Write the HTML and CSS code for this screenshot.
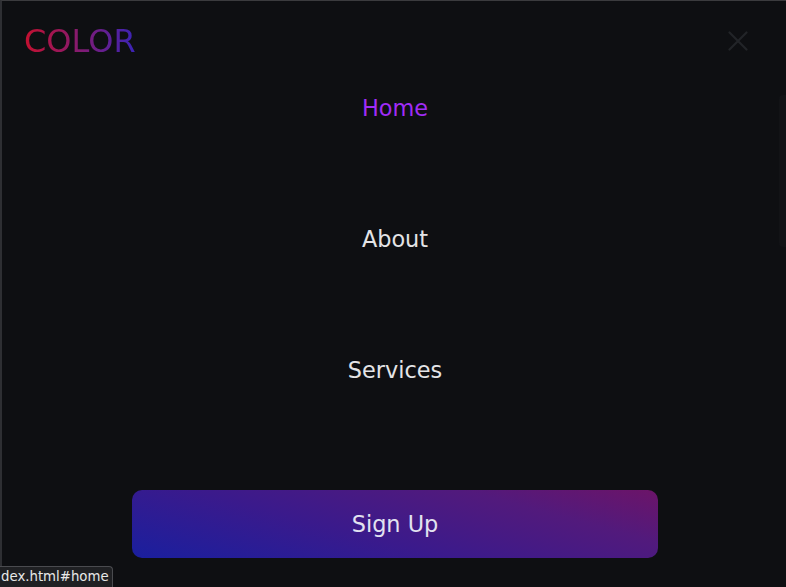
FILE: index.html
```html
<!DOCTYPE html>
<html lang="en">
<head>
<meta charset="utf-8">
<title>COLOR</title>
<link rel="stylesheet" href="styles.css">
</head>
<body>
<div class="page">
  <header class="header">
    <a class="logo" href="#home">COLOR</a>
    <button class="close" aria-label="Close menu">
      <svg width="20" height="20" viewBox="0 0 20 20" aria-hidden="true">
        <path d="M1.5 1.5 L18.5 18.5 M18.5 1.5 L1.5 18.5" stroke="#222428" stroke-width="2.2" stroke-linecap="round" fill="none"/>
      </svg>
    </button>
  </header>
  <nav class="menu">
    <ul class="menu-list">
      <li><a class="menu-link active" href="#home">Home</a></li>
      <li><a class="menu-link" href="#about">About</a></li>
      <li><a class="menu-link" href="#services">Services</a></li>
    </ul>
    <a class="signup" href="#signup">Sign Up</a>
  </nav>
  <div class="edge"></div>
</div>
<div class="status">dex.html#home</div>
</body>
</html>
```

FILE: styles.css
```css
html, body {
  margin: 0;
  padding: 0;
  height: 100%;
  background: #0e0f12;
}

body {
  font-family: "DejaVu Sans", "Noto Sans", sans-serif;
  overflow: hidden;
}

.page {
  position: relative;
  height: 587px;
  box-sizing: border-box;
  border-top: 1px solid #3b3b3e;
  border-left: 2px solid #2e2f33;
  background: #0e0f12;
}

.header {
  height: 80px;
  display: flex;
  align-items: center;
  justify-content: space-between;
  padding: 0 38px 0 22px;
}

.logo {
  font-size: 32px;
  line-height: 40px;
  text-decoration: none;
  background: linear-gradient(90deg, #c4102f 0%, #8a1a6a 45%, #3a24b8 100%);
  -webkit-background-clip: text;
  background-clip: text;
  color: transparent;
}

.close {
  background: none;
  border: 0;
  padding: 0;
  width: 20px;
  height: 20px;
  display: flex;
  cursor: pointer;
}

.menu {
  display: flex;
  flex-direction: column;
  align-items: center;
  padding-left: 2px;
  margin-top: 12px;
}

.menu-list {
  list-style: none;
  margin: 0;
  padding: 0;
  display: flex;
  flex-direction: column;
  align-items: center;
  gap: 101px;
}

.menu-link {
  display: block;
  font-size: 22.4px;
  line-height: 30px;
  color: #e4e4e6;
  text-decoration: none;
}

.menu-link.active {
  color: #a02cf6;
}

.signup {
  margin-top: 105px;
  width: 526px;
  height: 68px;
  box-sizing: border-box;
  padding-bottom: 1px;
  border-radius: 10px;
  display: flex;
  align-items: center;
  justify-content: center;
  font-size: 22.4px;
  color: #e2e2f0;
  text-decoration: none;
  background: linear-gradient(15deg, #1a1f9e 0%, #3a1a8c 40%, #521a7c 75%, #6c1468 100%);
}

.edge {
  position: absolute;
  right: 0;
  top: 94px;
  width: 7px;
  height: 152px;
  border-radius: 4px 0 0 4px;
  background: #121316;
}

.status {
  position: fixed;
  left: 0;
  bottom: 0;
  height: 21px;
  box-sizing: border-box;
  padding: 0 3px 0 1px;
  background: #1f2023;
  border-top: 1px solid #4a4b4f;
  border-right: 1px solid #4a4b4f;
  border-top-right-radius: 4px;
  color: #e8e8e8;
  font-size: 13.3px;
  line-height: 20px;
}
```
